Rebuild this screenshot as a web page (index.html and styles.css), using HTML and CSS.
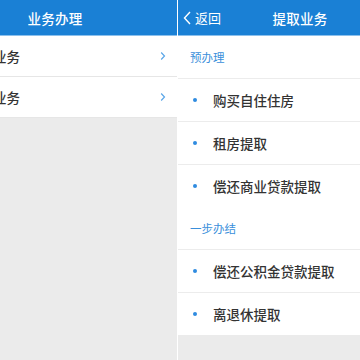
FILE: index.html
```html
<!DOCTYPE html>
<html lang="zh-CN">
<head>
  <meta charset="UTF-8">
  <title>业务办理</title>
  <meta name="viewport" content="width=360, initial-scale=1.0">
  <link rel="stylesheet" href="styles.css">
</head>
<body>
  <div id="frame">
    <div id="stage">
      <div class="screen" id="leftScreen">
        <div class="navBar">
          <div class="navTitle">业务办理</div>
        </div>
        <div class="menuList">
          <div class="menuRow">
            <span class="menuText">提取业务</span>
            <svg class="chevron" width="6" height="10" viewBox="0 0 6 10"><path d="M1.2 1.5 L4.5 5 L1.2 8.5" fill="none" stroke="#5aa6e8" stroke-width="1.2"/></svg>
          </div>
          <div class="menuRow">
            <span class="menuText">贷款业务</span>
            <svg class="chevron" width="6" height="10" viewBox="0 0 6 10"><path d="M1.2 1.5 L4.5 5 L1.2 8.5" fill="none" stroke="#5aa6e8" stroke-width="1.2"/></svg>
          </div>
        </div>
      </div>
      <div class="screen" id="rightScreen">
        <div class="navBar">
          <div class="backBtn">
            <svg width="8" height="14" viewBox="0 0 8 14"><path d="M7 1 L1.5 7 L7 13" fill="none" stroke="#fff" stroke-width="1.4"/></svg>
            <span>返回</span>
          </div>
          <div class="navTitle">提取业务</div>
        </div>
        <div class="itemList">
          <div class="groupHead">预办理</div>
          <div class="item"><span class="dot"></span>购买自住住房</div>
          <div class="item"><span class="dot"></span>租房提取</div>
          <div class="item last"><span class="dot"></span>偿还商业贷款提取</div>
          <div class="groupHead">一步办结</div>
          <div class="item"><span class="dot"></span>偿还公积金贷款提取</div>
          <div class="item last"><span class="dot"></span>离退休提取</div>
        </div>
      </div>
    </div>
  </div>
</body>
</html>
```

FILE: styles.css
```css
body {
  margin: 0;
  background: #fff;
  font-family: "Noto Sans CJK SC", "Noto Sans", sans-serif;
}
#frame {
  width: 360px;
  height: 360px;
  overflow: hidden;
}
#stage {
  display: flex;
  gap: 1px;
  width: 489px;
  height: 360px;
  margin-left: -67px;
}
.screen {
  width: 244px;
  flex: none;
  background: #ebebeb;
  display: flex;
  flex-direction: column;
}
.navBar {
  height: 35px;
  background: #1a80d5;
  border-bottom: 1px solid #8cc0ec;
  display: flex;
  align-items: center;
  justify-content: center;
  position: relative;
  color: #fff;
}
.navTitle {
  font-size: 13.5px;
  font-weight: 500;
  letter-spacing: 0.3px;
}
.backBtn {
  position: absolute;
  left: 5px;
  top: 0;
  height: 35px;
  display: flex;
  align-items: center;
  gap: 4px;
  font-size: 13px;
}
.menuList {
  background: #fff;
}
.menuRow {
  height: 40px;
  border-bottom: 1px solid #e6e6e6;
  display: flex;
  align-items: center;
  justify-content: space-between;
  padding: 0 11px 0 33px;
}
.menuText {
  font-size: 13.5px;
  font-weight: 500;
  color: #333;
}
.itemList {
  background: #fff;
}
.groupHead {
  height: 42px;
  border-bottom: 1px solid #ececec;
  display: flex;
  align-items: center;
  padding-left: 12px;
  font-size: 11.5px;
  color: #3a8fdb;
}
.item {
  height: 42px;
  border-bottom: 1px solid #ececec;
  display: flex;
  align-items: center;
  padding-left: 15px;
  font-size: 13.5px;
  font-weight: 500;
  color: #333;
}
.item.last {
  border-bottom: none;
}
.dot {
  width: 4px;
  height: 4px;
  border-radius: 50%;
  background: #2f8be0;
  margin-right: 16px;
}
```
